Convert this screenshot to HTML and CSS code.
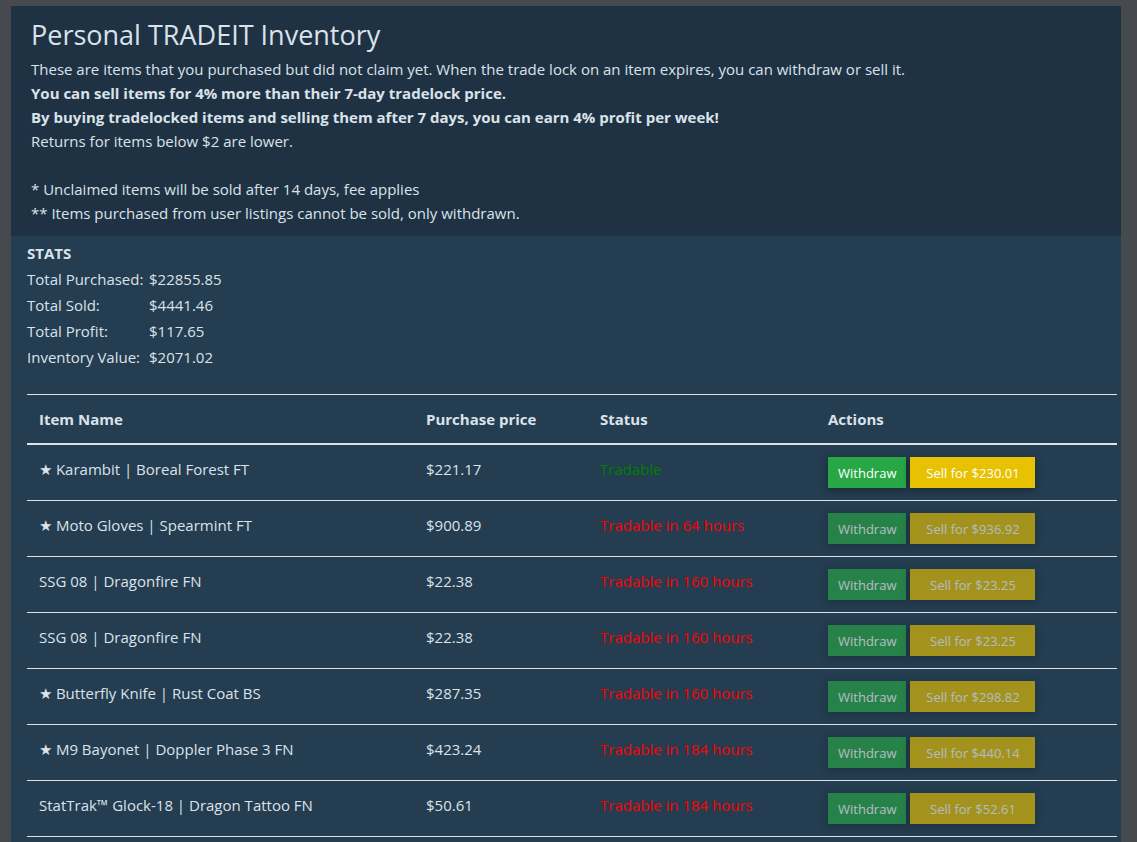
FILE: index.html
```html
<!DOCTYPE html>
<html>
<head>
<meta charset="utf-8">
<link rel="stylesheet" href="styles.css">
</head>
<body>
<div class="panel">
  <div class="intro">
    <h1 class="title">Personal TRADEIT Inventory</h1>
    <p class="line">These are items that you purchased but did not claim yet. When the trade lock on an item expires, you can withdraw or sell it.</p>
    <p class="line strong">You can sell items for 4% more than their 7-day tradelock price.</p>
    <p class="line strong">By buying tradelocked items and selling them after 7 days, you can earn 4% profit per week!</p>
    <p class="line">Returns for items below $2 are lower.</p>
    <p class="line blank">&nbsp;</p>
    <p class="line">* Unclaimed items will be sold after 14 days, fee applies</p>
    <p class="line">** Items purchased from user listings cannot be sold, only withdrawn.</p>
  </div>
  <div class="content">
    <div class="stats">
      <div class="stats-title">STATS</div>
      <div class="stats-grid">
        <span>Total Purchased:</span><span>$22855.85</span>
        <span>Total Sold:</span><span>$4441.46</span>
        <span>Total Profit:</span><span>$117.65</span>
        <span>Inventory Value:</span><span>$2071.02</span>
      </div>
    </div>
    <table class="items">
      <thead>
        <tr>
          <th class="c-name">Item Name</th>
          <th class="c-price">Purchase price</th>
          <th class="c-status">Status</th>
          <th class="c-actions">Actions</th>
        </tr>
      </thead>
      <tbody>
        <tr>
          <td>★ Karambit | Boreal Forest FT</td>
          <td>$221.17</td>
          <td class="ok">Tradable</td>
          <td><div class="actions"><button class="btn withdraw">Withdraw</button><button class="btn sell">Sell for $230.01</button></div></td>
        </tr>
        <tr>
          <td>★ Moto Gloves | Spearmint FT</td>
          <td>$900.89</td>
          <td class="locked">Tradable in 64 hours</td>
          <td><div class="actions"><button class="btn withdraw" disabled>Withdraw</button><button class="btn sell" disabled>Sell for $936.92</button></div></td>
        </tr>
        <tr>
          <td>SSG 08 | Dragonfire FN</td>
          <td>$22.38</td>
          <td class="locked">Tradable in 160 hours</td>
          <td><div class="actions"><button class="btn withdraw" disabled>Withdraw</button><button class="btn sell" disabled>Sell for $23.25</button></div></td>
        </tr>
        <tr>
          <td>SSG 08 | Dragonfire FN</td>
          <td>$22.38</td>
          <td class="locked">Tradable in 160 hours</td>
          <td><div class="actions"><button class="btn withdraw" disabled>Withdraw</button><button class="btn sell" disabled>Sell for $23.25</button></div></td>
        </tr>
        <tr>
          <td>★ Butterfly Knife | Rust Coat BS</td>
          <td>$287.35</td>
          <td class="locked">Tradable in 160 hours</td>
          <td><div class="actions"><button class="btn withdraw" disabled>Withdraw</button><button class="btn sell" disabled>Sell for $298.82</button></div></td>
        </tr>
        <tr>
          <td>★ M9 Bayonet | Doppler Phase 3 FN</td>
          <td>$423.24</td>
          <td class="locked">Tradable in 184 hours</td>
          <td><div class="actions"><button class="btn withdraw" disabled>Withdraw</button><button class="btn sell" disabled>Sell for $440.14</button></div></td>
        </tr>
        <tr>
          <td>StatTrak™ Glock-18 | Dragon Tattoo FN</td>
          <td>$50.61</td>
          <td class="locked">Tradable in 184 hours</td>
          <td><div class="actions"><button class="btn withdraw" disabled>Withdraw</button><button class="btn sell" disabled>Sell for $52.61</button></div></td>
        </tr>
      </tbody>
    </table>
  </div>
</div>
</body>
</html>
```

FILE: styles.css
```css
html, body {
  margin: 0;
  padding: 0;
}
body {
  background: #46494d;
  font-family: "Open Sans", "Noto Sans", sans-serif;
  font-size: 15px;
  color: #dbe2e9;
  padding: 6px 16px 0 11px;
  height: 842px;
  box-sizing: border-box;
  overflow: hidden;
}
.panel {
  background: #243d51;
  min-height: 900px;
}
.intro {
  background: #1f3244;
  padding: 12px 20px 11px 20px;
}
.title {
  margin: 0 0 5px 0;
  font-size: 27px;
  line-height: 34px;
  font-weight: 500;
  color: #dbe2e9;
}
.line {
  margin: 0;
  line-height: 24px;
}
.strong {
  font-weight: 700;
}
.content {
  padding: 4px 4px 0 16px;
}
.stats-title {
  font-weight: 700;
  line-height: 26px;
}
.stats-grid {
  display: grid;
  grid-template-columns: 122px 1fr;
  line-height: 26px;
}
.items {
  margin-top: 24px;
  width: 100%;
  border-collapse: collapse;
  table-layout: fixed;
}
.items th, .items td {
  text-align: left;
  vertical-align: top;
  padding: 12px;
  line-height: 24px;
  border-top: 1px solid #dee2e6;
}
.items tbody tr:last-child td {
  border-bottom: 1px solid #dee2e6;
}
.items th {
  font-weight: 700;
  border-bottom: 2px solid #dee2e6;
}
.c-name { width: 363px; }
.c-price { width: 150px; }
.c-status { width: 204px; }
.c-actions { width: auto; }
.ok { color: #008000; }
.locked { color: #ff0000; }
.actions {
  display: flex;
  gap: 4px;
}
.btn {
  font-family: inherit;
  font-size: 13px;
  height: 31px;
  padding: 0 10px;
  border: none;
  border-radius: 0;
  color: #fff;
  box-shadow: 0 2px 8px rgba(0, 0, 0, 0.35);
  cursor: pointer;
}
.btn:disabled {
  opacity: 0.65;
  cursor: default;
}
.withdraw { background: #28a745; }
.sell { background: #e8c100; min-width: 125px; }
```
